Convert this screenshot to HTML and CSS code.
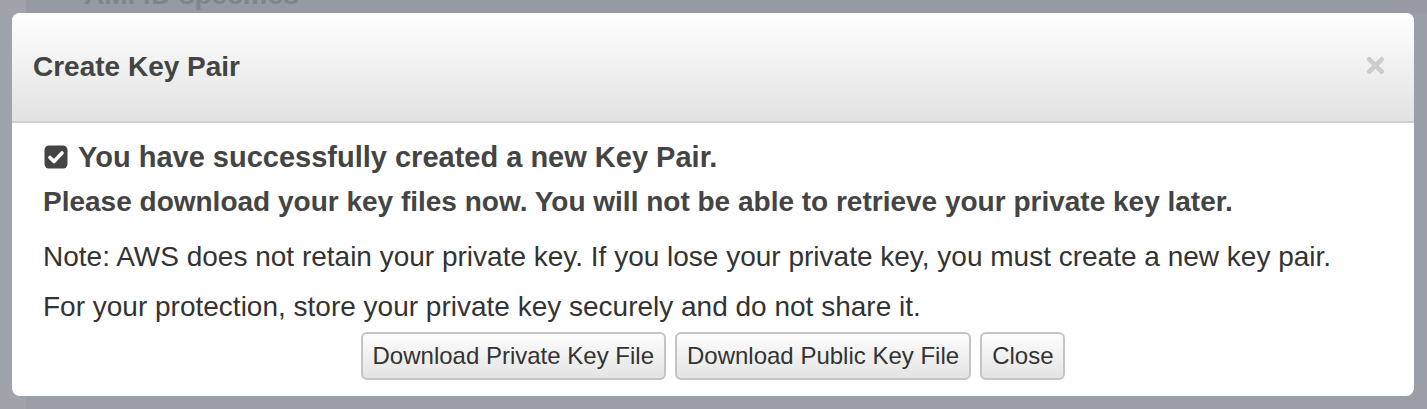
FILE: index.html
```html
<!DOCTYPE html>
<html>
	<head>
		<meta charset="UTF-8">
		<title>Create Key Pair</title>
		<link rel="stylesheet" href="styles.css">
	</head>
	<body>
		<div class="backdrop">
			<div class="page-title">AMI ID specifics</div>
		</div>
		<div class="modal">
			<header class="modal-head">
				<h1>Create Key Pair</h1>
				<svg class="modal-x" viewBox="0 0 20 20" width="19" height="19">
					<path d="M3.5 3.5 L16.5 16.5 M16.5 3.5 L3.5 16.5" stroke="#cdcdcd" stroke-width="5" stroke-linecap="round"/>
				</svg>
			</header>
			<div class="modal-body">
				<p class="msg-ok">
					<svg class="ok-icon" viewBox="0 0 24 24" width="24" height="24">
						<rect x="0.5" y="0.5" width="23" height="23" rx="4.5" fill="#444"/>
						<path d="M6 12.5 L10 16.5 L18 8" fill="none" stroke="#fff" stroke-width="3.6" stroke-linecap="round" stroke-linejoin="round"/>
					</svg>
					You have successfully created a new Key Pair.
				</p>
				<p class="msg-warn">Please download your key files now. You will not be able to retrieve your private key later.</p>
				<p class="msg-note">Note: AWS does not retain your private key. If you lose your private key, you must create a new key pair.</p>
				<p class="msg-note last">For your protection, store your private key securely and do not share it.</p>
				<div class="actions">
					<button class="btn">Download Private Key File</button>
					<button class="btn">Download Public Key File</button>
					<button class="btn">Close</button>
				</div>
			</div>
		</div>
	</body>
</html>
```

FILE: styles.css
```css
html, body {
	margin: 0;
	height: 100%;
}

body {
	background: #9a9ea6;
	font-family: "Liberation Sans", Arial, Helvetica, sans-serif;
	color: #444;
	position: relative;
	overflow: hidden;
}

/* page behind the overlay */
.backdrop {
	position: absolute;
	inset: 0;
	border-left: 26px solid #a0a4aa;
	background: linear-gradient(#969aa2, #969aa2) no-repeat;
	background-size: 100% 13px;
}
.page-title {
	position: absolute;
	left: 58px;
	top: -21px;
	font-size: 28px;
	font-weight: bold;
	color: #80848c;
}

.modal {
	position: absolute;
	left: 12px;
	top: 13px;
	width: 1402px;
	height: 383px;
	background: #fff;
	border-radius: 8px;
	overflow: hidden;
	display: flex;
	flex-direction: column;
}

.modal-head {
	height: 108px;
	flex: none;
	display: flex;
	align-items: center;
	justify-content: space-between;
	padding: 0 29px 0 21px;
	background: linear-gradient(#ffffff, #e2e2e2);
	border-bottom: 2px solid #cfcfcf;
}
.modal-head > h1 {
	margin: 0;
	font-size: 28px;
	font-weight: bold;
	color: #444;
}
.modal-x {
	margin-bottom: 4px;
}

.modal-body {
	padding: 16px 31px 0;
}
.modal-body p {
	margin: 0;
}
.msg-ok {
	display: flex;
	align-items: center;
	gap: 10px;
	font-size: 29px;
	font-weight: bold;
	line-height: 36px;
}
.ok-icon {
	margin-left: 1px;
}
.msg-warn {
	font-size: 28px;
	font-weight: bold;
	line-height: 36px;
	margin-top: 9px !important;
}
.msg-note {
	font-size: 28px;
	line-height: 36px;
	color: #333;
	margin-top: 19px !important;
}
.msg-note.last {
	margin-top: 14px !important;
}

.actions {
	display: flex;
	justify-content: center;
	gap: 9px;
	margin-top: 7px;
}
.btn {
	font-family: inherit;
	font-size: 24px;
	color: #333;
	height: 48px;
	padding: 0 10px;
	background: linear-gradient(#fdfdfd, #e4e4e4);
	border: 2px solid #c4c4c4;
	border-radius: 6px;
}
```
